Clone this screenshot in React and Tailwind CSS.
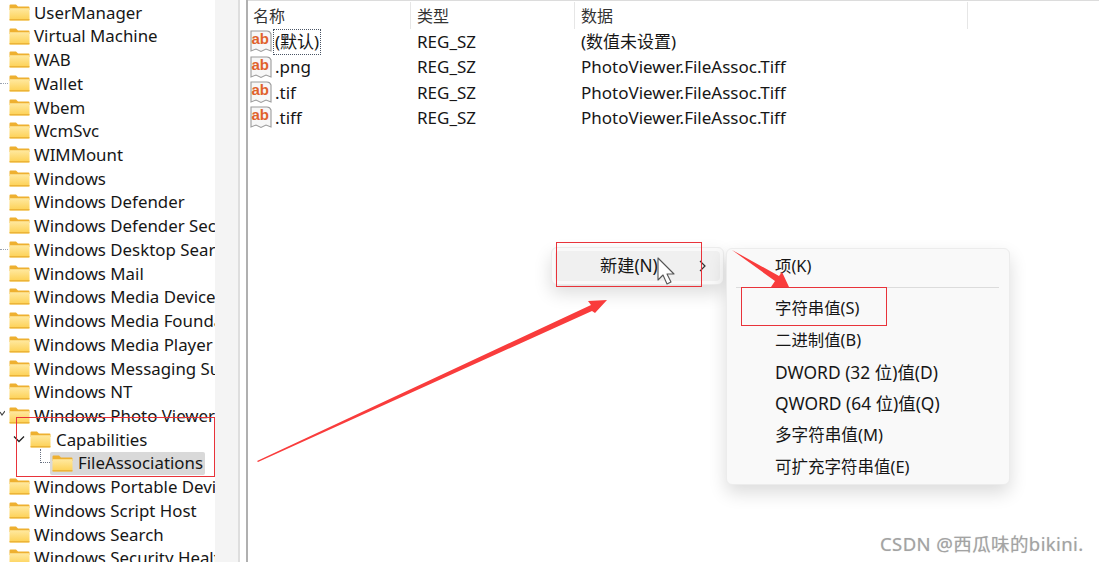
const treeRows = [
  { label: "UserManager" },
  { label: "Virtual Machine" },
  { label: "WAB" },
  { label: "Wallet", dots: true },
  { label: "Wbem" },
  { label: "WcmSvc" },
  { label: "WIMMount" },
  { label: "Windows" },
  { label: "Windows Defender" },
  { label: "Windows Defender Security Center" },
  { label: "Windows Desktop Search", dots: true },
  { label: "Windows Mail" },
  { label: "Windows Media Device Manager" },
  { label: "Windows Media Foundation" },
  { label: "Windows Media Player NSS" },
  { label: "Windows Messaging Subsystem" },
  { label: "Windows NT" },
  { label: "Windows Photo Viewer", open: true },
  { label: "Capabilities", level: 1 },
  { label: "FileAssociations", level: 2 },
  { label: "Windows Portable Devices" },
  { label: "Windows Script Host" },
  { label: "Windows Search" },
  { label: "Windows Security Health" },
];

const values = [
  { name: "(默认)", type: "REG_SZ", data: "(数值未设置)", focused: true },
  { name: ".png", type: "REG_SZ", data: "PhotoViewer.FileAssoc.Tiff" },
  { name: ".tif", type: "REG_SZ", data: "PhotoViewer.FileAssoc.Tiff" },
  { name: ".tiff", type: "REG_SZ", data: "PhotoViewer.FileAssoc.Tiff" },
];

const subMenu = [
  { label: "二进制值(B)", size: "text-[16.4px]" },
  { label: "DWORD (32 位)值(D)", size: "text-[17.4px]" },
  { label: "QWORD (64 位)值(Q)", size: "text-[17.4px]" },
  { label: "多字符串值(M)", size: "text-[16.6px]" },
  { label: "可扩充字符串值(E)", size: "text-[16.5px]" },
];

function Folder() {
  return (
    <svg width="21" height="17" viewBox="0 0 21 17" className="shrink-0">
      <defs>
        <linearGradient id="folderFill" x1="0" y1="0" x2="0" y2="1">
          <stop offset="0" stopColor="#ffe9a0" />
          <stop offset="1" stopColor="#fdd052" />
        </linearGradient>
      </defs>
      <path d="M0.5 1.5 Q0.5 0.5 1.5 0.5 H7 L9 2.5 H19.5 Q20.5 2.5 20.5 3.5 V6 H0.5 Z" fill="#eeb030" />
      <path d="M0.5 4.2 H20.5 V15.5 Q20.5 16.5 19.5 16.5 H1.5 Q0.5 16.5 0.5 15.5 Z" fill="url(#folderFill)" />
      <path d="M0.5 15.8 H20.5" stroke="#e8ad30" strokeWidth="1.2" />
    </svg>
  );
}

function RegIcon() {
  return (
    <svg width="22" height="23" viewBox="0 0 22 23" className="shrink-0">
      <path d="M1 1 H17 Q20 1 21 4 V21 L16 19 L11 21.5 L6 19 L1 21 Z" fill="#f7f7f7" stroke="#9c9c9c" strokeWidth="1.1" />
      <text x="1.5" y="14" fontSize="15" fontWeight="700" fill="#e0622c" fontFamily="Liberation Sans, sans-serif">ab</text>
    </svg>
  );
}

function TreeRow({ row }) {
  const level = row.level || 0;
  return (
    <div className="relative h-[23.72px] flex items-center whitespace-nowrap">
      {row.dots && <div className="absolute left-0 top-[11px] w-[8px] border-t border-dotted border-gray-400" />}
      {row.open && (
        <svg width="5" height="8" viewBox="0 0 5 8" className="absolute left-0 top-[6px]">
          <path d="M0 2 L2 5 L5 1" fill="none" stroke="#444" strokeWidth="1.2" />
        </svg>
      )}
      {level === 0 && (
        <div className="flex items-center pl-[9px] gap-[4px]">
          <Folder />
          <span>{row.label}</span>
        </div>
      )}
      {level === 1 && (
        <div className="flex items-center pl-[13px]">
          <svg width="12" height="8" viewBox="0 0 12 8" className="mr-[5px]">
            <path d="M1 1.5 L6 6.5 L11 1.5" fill="none" stroke="#222" strokeWidth="1.3" />
          </svg>
          <Folder />
          <span className="ml-[5px]">{row.label}</span>
        </div>
      )}
      {level === 2 && (
        <div className="flex items-center pl-[40px]">
          <div className="w-[10px] h-[14px] -mt-[14px] border-l border-b border-dotted border-gray-500" />
          <div className="flex items-center h-[23px] w-[155px] pl-[2px] gap-[5px] bg-[#d9d9d9] rounded-[2px]">
            <Folder />
            <span>{row.label}</span>
          </div>
        </div>
      )}
    </div>
  );
}

function ValueRow({ value }) {
  return (
    <div className="h-[25.4px] flex items-center whitespace-nowrap text-[17px]">
      <div className="w-[166px] flex items-center pl-[2px]">
        <RegIcon />
        <span className={value.focused ? "ml-[1px] px-[1px] border border-dotted border-gray-600 leading-[24px]" : "ml-[3px]"}>
          {value.name}
        </span>
      </div>
      <div className="w-[164px] pl-[3px]">{value.type}</div>
      <div className="pl-[3px]">{value.data}</div>
    </div>
  );
}

export default function App() {
  return (
    <div
      className="relative w-[1099px] h-[562px] overflow-hidden bg-white flex text-[16.85px] text-[#161616]"
      style={{ fontFamily: '"Noto Sans", "Noto Sans CJK SC", sans-serif' }}
    >
      {/* tree */}
      <div className="w-[215px] shrink-0 overflow-hidden pt-[0.5px]">
        {treeRows.map((row) => (
          <TreeRow key={row.label} row={row} />
        ))}
      </div>
      <div className="w-[25px] shrink-0 bg-[#f4f4f4] border-r-2 border-[#dedede]" />
      <div className="w-[8px] shrink-0 bg-white border-r-2 border-[#b0b0b0]" />

      {/* values */}
      <div className="flex-1 border-t border-[#dcdcdc] pt-[1px]">
        <div className="h-[27px] flex items-center text-[16px] text-[#333]">
          <div className="w-[163px] h-full flex items-center pl-[5px] border-r border-[#e6e6e6]">名称</div>
          <div className="w-[164px] h-full flex items-center pl-[6px] border-r border-[#e6e6e6]">类型</div>
          <div className="w-[393px] h-full flex items-center pl-[6px] border-r border-[#e6e6e6]">数据</div>
        </div>
        {values.map((value) => (
          <ValueRow key={value.name} value={value} />
        ))}
      </div>

      {/* context menu */}
      <div className="absolute left-[551px] top-[247px] w-[173px] h-[38px] p-[3px] bg-[#f9f9f9] rounded-[6px] border border-[#ececec] shadow-[0_8px_18px_rgba(0,0,0,0.14)] text-[17.2px]">
        <div className="h-full pl-[45px] pr-[14px] flex items-center justify-between bg-[#f0f0f0] rounded-[4px]">
          <span>新建(N)</span>
          <svg width="7" height="12" viewBox="0 0 7 12">
            <path d="M1 1 L6 6 L1 11" fill="none" stroke="#333" strokeWidth="1.2" />
          </svg>
        </div>
      </div>

      {/* sub menu */}
      <div className="absolute left-[726px] top-[248px] w-[284px] h-[237px] bg-[#f9f9f9] rounded-[6px] border border-[#ececec] shadow-[0_8px_18px_rgba(0,0,0,0.14)] text-[16.4px] pl-[48px]">
        <div className="h-[38px] pb-[3px] flex items-center">项(K)</div>
        <div className="-ml-[39px] mr-[10px] border-t border-[#dcdcdc]" />
        <div className="h-[41px] flex items-center">字符串值(S)</div>
        <div className="-mt-[5px]">
          {subMenu.map((item) => (
            <div key={item.label} className={`h-[31.8px] flex items-center ${item.size}`}>{item.label}</div>
          ))}
        </div>
      </div>

      {/* cursor */}
      <svg width="20" height="30" viewBox="0 0 20 30" className="absolute left-[657px] top-[257px]">
        <path d="M1 1 V23 L6 18 L10 27 L14 25 L10 17 L17 17 Z" fill="#fff" stroke="#555" strokeWidth="1.1" strokeLinejoin="round" />
      </svg>

      {/* red annotations */}
      <div className="absolute left-[16px] top-[417px] w-[199px] h-[60px] border border-[#e8333a]" />
      <div className="absolute left-[556px] top-[242px] w-[146px] h-[45px] border border-[#e8333a]" />
      <div className="absolute left-[741px] top-[287px] w-[146px] h-[39px] border border-[#e8333a]" />
      <svg width="1099" height="562" viewBox="0 0 1099 562" className="absolute left-0 top-0 pointer-events-none">
        <polygon points="257,461 591,305 588,301 607,300 595,313 592,311 258,462" fill="#f93c3c" />
        <polygon points="732,250 779,276 782,272 789,287 771,287 775,281" fill="#f93c3c" />
      </svg>

      {/* watermark */}
      <div className="absolute left-[880px] top-[530px] text-[18.5px] text-[#a3a3a3] tracking-[0.4px] whitespace-nowrap [text-shadow:0_0_1px_#d0d0d0]">
        CSDN @西瓜味的bikini.
      </div>
    </div>
  );
}
